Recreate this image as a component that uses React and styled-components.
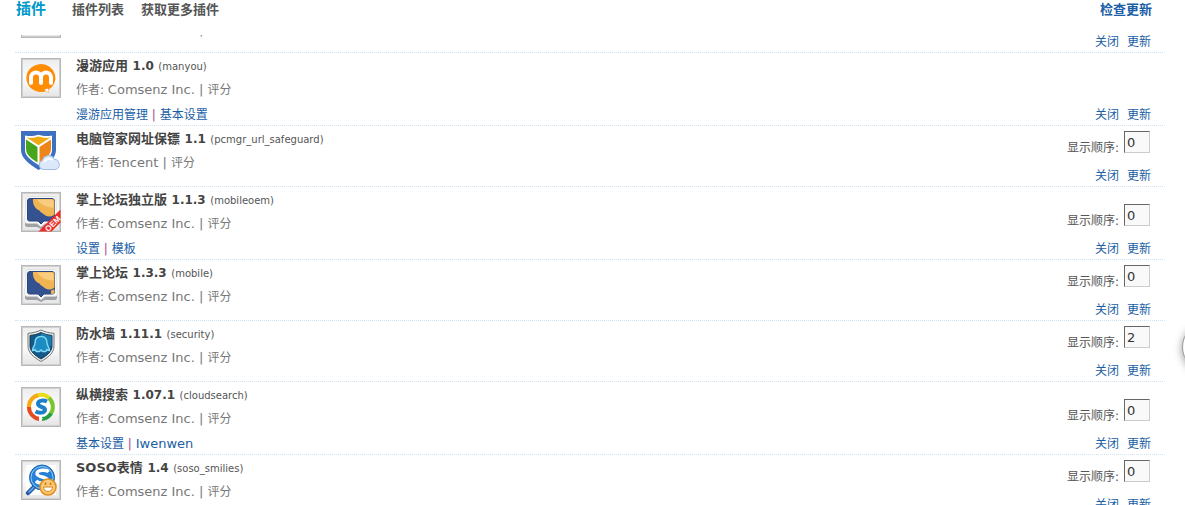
import React, { useState } from 'react'
import styled, { createGlobalStyle } from 'styled-components'

const GlobalStyle = createGlobalStyle`
  * { box-sizing: border-box; }
  body {
    margin: 0;
    height: 100vh;
    overflow: hidden;
    background: #fff;
    color: #555;
    font: 12px/24px "DejaVu Sans", "Noto Sans CJK SC", sans-serif;
  }
  a { color: #1a5ea6; text-decoration: none; }
  h1, h2, p, ul { margin: 0; padding: 0; }
  ul { list-style: none; }
`;

const Page = styled.div`
  padding: 0 20px 0 15px;
`;

const Header = styled.header`
  position: relative;
  z-index: 1;
  display: flex;
  align-items: flex-start;
  height: 35px;
  padding: 0 13px 0 1px;
  background: #fff;
  line-height: 20px;
`;

const PageTitle = styled.h1`
  margin-right: 26px;
  color: #0099cc;
  font-size: 15px;
  line-height: 18px;
`;

const Nav = styled.nav`
  display: flex;
  flex: 1;
  gap: 17px;
`;

const HeaderLink = styled.a`
  color: ${({ $strong }) => ($strong ? '#1a5ea6' : '#555')};
  font-size: 13px;
  font-weight: bold;
`;

/* the list is scrolled a little way under the header */
const List = styled.ul`
  margin-top: -42px;
`;

const Row = styled.li`
  display: flex;
  min-height: 60px;
  padding: 0 13px 0 6px;
  border-bottom: 1px dotted #cfe3f3;
`;

const IconBox = styled.div`
  flex: none;
  width: 40px;
  height: 40px;
  margin: 5px 15px 0 0;
  svg { display: block; }
`;

const Info = styled.div`
  flex: 1;
  margin-bottom: -1px;
`;

const Name = styled.h2`
  height: 25px;
  color: #444;
  font-size: 13px;
  line-height: 26px;
`;

const Version = styled.span`
  font-size: 12px;
  line-height: 1;
`;

const Ident = styled.span`
  color: #555;
  font-size: 10px;
  font-weight: normal;
  line-height: 1;
`;

const Author = styled.p`
  color: #777;
  a { color: #777; }
`;

const Latin = styled.span`
  font-size: 13px;
  line-height: 1;
`;

const Links = styled.p`
  height: 24px;
  color: #a4478c;
  line-height: 26px;
`;

const Side = styled.div`
  display: flex;
  flex-direction: column;
  justify-content: flex-end;
  align-items: flex-end;
`;

const Order = styled.label`
  display: flex;
  align-items: flex-end;
  gap: 5px;
  padding: 5px 2px 11px 0;
  line-height: 10px;
`;

const OrderInput = styled.input`
  width: 26px;
  height: 22px;
  padding: 0 0 0 2px;
  border: 1px solid;
  border-color: #666 #ccc #ccc #666;
  background: #f9f9f9;
  color: #333;
  font: 13px "DejaVu Sans", sans-serif;
`;

const Actions = styled.div`
  display: flex;
  gap: 8px;
  height: 22px;
  padding-right: 1px;
  line-height: 24px;
`;

const FloatButton = styled.button`
  position: fixed;
  top: 322px;
  right: -47px;
  width: 50px;
  height: 50px;
  border: 1px solid #999;
  border-radius: 50%;
  background: #fff;
  box-shadow: 0 2px 8px rgba(0, 0, 0, 0.4);
`;

const Frame = ({ children }) => (
  <svg width="40" height="40" viewBox="0 0 40 40" aria-hidden="true">
    <defs>
      <linearGradient id="plate" x1="0" y1="0" x2="0" y2="1">
        <stop offset="0" stopColor="#ececec" />
        <stop offset=".5" stopColor="#fdfdfd" />
        <stop offset="1" stopColor="#e4e4e4" />
      </linearGradient>
    </defs>
    <rect x=".5" y=".5" width="39" height="39" fill="url(#plate)" stroke="#b8b8b8" />
    <rect x="1.5" y="1.5" width="37" height="37" fill="none" stroke="#d0d0d0" />
    {children}
  </svg>
)

const ManyouIcon = () => (
  <Frame>
    <path d="M20 6a15 14 0 1 0 5 27.300l2.500 1.700-.3-3A15 14 0 0 0 20 6z" fill="#ff8c05" />
    <path d="M10 25v-5.500a5 5 0 0 1 10 0V25m0-5.500a5 5 0 0 1 10 0V25" fill="none" stroke="#fff" strokeWidth="4" strokeLinecap="round" />
    <path d="M23.500 31.500l3 3 .8-4z" fill="#fff" />
  </Frame>
)

const GuardIcon = () => (
  <svg width="40" height="40" viewBox="0 0 40 40" aria-hidden="true">
    <path d="M0 0h35v19c0 8-8 14-17.500 20C8 33 0 27 0 19z" fill="#3f6fc0" />
    <path d="M4 4.500c5 1 9 .5 13.500-.8C22 5 26 5.500 31 4.500V19c0 6-6 10.500-13.500 15C10 29.500 4 25 4 19z" fill="#fff" />
    <path d="M5.500 6.500c4.500.8 8 .3 12-1 4 1.300 7.500 1.800 12 1l-12 7.800z" fill="#f1a912" />
    <path d="M5 8.500l11.500 7.500v15.500C10 27.500 5 23.500 5 18z" fill="#47a51c" />
    <path d="M30 8.500L18.500 16v15.500C25 27.500 30 23.500 30 18z" fill="#ee8518" />
    <path d="M22 38.500a4.700 4.700 0 0 1-.8-9 6.500 6.500 0 0 1 12-1.500 5.500 5.500 0 0 1 1.800 10.500z" fill="#dce9f8" stroke="#9fbce6" />
    <path d="M23.500 31a5 4.500 0 0 1 8-2" fill="none" stroke="#fff" strokeWidth="2" />
  </svg>
)

const MobileIcon = ({ oem }) => (
  <Frame>
    <path d="M6 7h28l2 22v4q0 2-2.500 2H24l-4 2-4-2H6.500Q4 35 4 33v-4z" fill="#9da1a5" />
    <path d="M7 4.500h26q2 0 2 2l1.500 22q0 3-3 3H24l-4 3.500-4-3.500H6.500q-3 0-3-3L5 6.500q0-2 2-2z" fill="#f7f7f7" stroke="#d3d5d7" strokeWidth=".6" />
    <path d="M9 6.500h22q2.500 0 2.500 2.500v18q0 2-2 2H23L20 32l-3-3H8.500q-2 0-2-2V9q0-2.500 2.500-2.500z" fill="#34528f" stroke="#2b467c" />
    <path d="M12 7H31q2.500 0 2.500 2v13.500C30 25.500 25 25 22.500 22c-1.500-1.300-3-1.500-4-3.500C14 17 11.500 12 12 7z" fill="#f0b452" />
    <path d="M16 7.500h14q2.500 0 2.500 2v6c-6 0-12-2-16.500-8z" fill="#f8cd80" />
    {oem ? (
      <>
        <path d="M17.500 39.500L39.500 17.500v13l-9 9z" fill="#ed2c27" />
        <text x="32" y="34.500" transform="rotate(-45 32 32)" textAnchor="middle" fill="#fff" fontSize="8" fontWeight="bold" fontFamily="Liberation Sans, sans-serif">OEM</text>
      </>
    ) : (
      <path d="M30 29v-3q0-1 3.500-1.500V27q0 2-2 2z" fill="#f0b452" />
    )}
  </Frame>
)

const SecurityIcon = () => (
  <Frame>
    <path d="M20 4c4 2 8 3 13 3.300V20c0 7-6 11.500-13 15.500C13 31.500 7 27 7 20V7.300C12 7 16 6 20 4z" fill="#eee" stroke="#777" />
    <path d="M20 6.500c4 1.800 7 2.600 11 2.900V20c0 5.500-5 9.500-11 13C14 29.500 9 25.500 9 20V9.400c4-.3 7-1.100 11-2.900z" fill="#125989" stroke="#18384f" />
    <path d="M20 7c4 1.700 7 2.500 10.500 2.800V20H20z" fill="#1a7eb0" />
    <path d="M20 10.500c-4.500 0-6 3-6 6.500 0 3-2.500 4-2.500 7.500 1.500 0 2.500-1 2.500-1 .5 1.500 1.500 2 1.500 2h3L20 24l1.500 1.500h3s1-.5 1.500-2c0 0 1 1 2.500 1 0-3.500-2.500-4.500-2.500-7.500 0-3.500-1.500-6.500-6-6.500z" fill="#1d8cc2" stroke="#82dbf5" strokeWidth="1.400" />
  </Frame>
)

const SearchIcon = () => (
  <Frame>
    <circle cx="20" cy="20" r="12" fill="#fff" />
    <g fill="none" strokeWidth="4">
      <path d="M8 21A12 12 0 0 1 18 8" stroke="#f5a912" />
      <path d="M17 8.300A12 12 0 0 1 29 12" stroke="#ebdc19" />
      <path d="M28 11A12 12 0 0 1 29.500 27" stroke="#7cc52e" />
      <path d="M30 26.500A12 12 0 0 1 21 32" stroke="#269d43" />
      <path d="M18.500 32A12 12 0 0 1 8 20" stroke="#e54a22" />
    </g>
    <path d="M26 14.500c-3-1.500-8.500-1.500-9 2-.5 4 7.500 3 7 6.500-.5 3.500-6.500 3-9.500 1.500" fill="none" stroke="#1c7fc8" strokeWidth="4" />
    <path d="M18 29l4 2.500-4 3z" fill="#fff" />
  </Frame>
)

const SmiliesIcon = () => (
  <Frame>
    <rect x="5" y="5" width="30" height="30" fill="#fff" />
    <path d="M7 33l7-7" stroke="#235aa3" strokeWidth="4.500" strokeLinecap="round" />
    <path d="M8 32l5-5" stroke="#70adec" strokeWidth="1.500" strokeLinecap="round" />
    <circle cx="21" cy="17.500" r="12.500" fill="#2580d6" stroke="#1a64b5" />
    <circle cx="21" cy="17.500" r="11" fill="none" stroke="#93cdf6" />
    <path d="M27.500 12c-2-2.500-11-2.500-11.500 1.500-.5 4 11 3 10.500 7-.5 4-9 3-11.500.5" fill="none" stroke="#fff" strokeWidth="3.400" />
    <circle cx="27" cy="27" r="8" fill="#fbc978" stroke="#e0901c" strokeWidth="1.600" />
    <path d="M22.500 27h9c0 6-9 6-9 0z" fill="#fff" stroke="#d9821a" />
    <path d="M24.500 22.500v2.500m5-2.500v2.500" stroke="#cf7a18" strokeWidth="1.600" />
  </Frame>
)

const plugins = [
  { id: 'top', author: 'Comsenz Inc.', icon: <Frame /> },
  { id: 'manyou', name: '漫游应用', version: '1.0', author: 'Comsenz Inc.', links: ['漫游应用管理', '基本设置'], icon: <ManyouIcon /> },
  { id: 'pcmgr_url_safeguard', name: '电脑管家网址保镖', version: '1.1', author: 'Tencent', order: '0', icon: <GuardIcon /> },
  { id: 'mobileoem', name: '掌上论坛独立版', version: '1.1.3', author: 'Comsenz Inc.', links: ['设置', '模板'], order: '0', icon: <MobileIcon oem /> },
  { id: 'mobile', name: '掌上论坛', version: '1.3.3', author: 'Comsenz Inc.', order: '0', icon: <MobileIcon /> },
  { id: 'security', name: '防水墙', version: '1.11.1', author: 'Comsenz Inc.', order: '2', icon: <SecurityIcon /> },
  { id: 'cloudsearch', name: '纵横搜索', version: '1.07.1', author: 'Comsenz Inc.', links: ['基本设置', 'Iwenwen'], order: '0', icon: <SearchIcon /> },
  { id: 'soso_smilies', name: 'SOSO表情', version: '1.4', author: 'Comsenz Inc.', order: '0', icon: <SmiliesIcon /> },
]

const Plugin = ({ plugin }) => {
  const { id, name, version, author, links, icon } = plugin
  const [order, setOrder] = useState(plugin.order)

  return (
    <Row>
      <IconBox>{icon}</IconBox>
      <Info>
        <Name>
          {name && <>{name} <Version>{version}</Version> <Ident>({id})</Ident></>}
        </Name>
        <Author>作者: <Latin>{author} | </Latin><a href="#rate">评分</a></Author>
        {links && (
          <Links>
            {links.map((link, i) => (
              <React.Fragment key={link}>
                {i > 0 && ' | '}
                <a href="#setting">{/^\w+$/.test(link) ? <Latin>{link}</Latin> : link}</a>
              </React.Fragment>
            ))}
          </Links>
        )}
      </Info>
      <Side>
        {order !== undefined && (
          <Order>
            显示顺序:
            <OrderInput type="text" value={order} onChange={(e) => setOrder(e.target.value)} />
          </Order>
        )}
        <Actions>
          <a href="#close">关闭</a>
          <a href="#update">更新</a>
        </Actions>
      </Side>
    </Row>
  )
}

const App = () => {
  return (
    <Page>
      <GlobalStyle />
      <Header>
        <PageTitle>插件</PageTitle>
        <Nav>
          <HeaderLink href="#list">插件列表</HeaderLink>
          <HeaderLink href="#more">获取更多插件</HeaderLink>
        </Nav>
        <HeaderLink $strong href="#check">检查更新</HeaderLink>
      </Header>
      <List>
        {plugins.map((plugin) => <Plugin key={plugin.id} plugin={plugin} />)}
      </List>
      <FloatButton type="button" aria-label="展开" />
    </Page>
  )
}

export default App
